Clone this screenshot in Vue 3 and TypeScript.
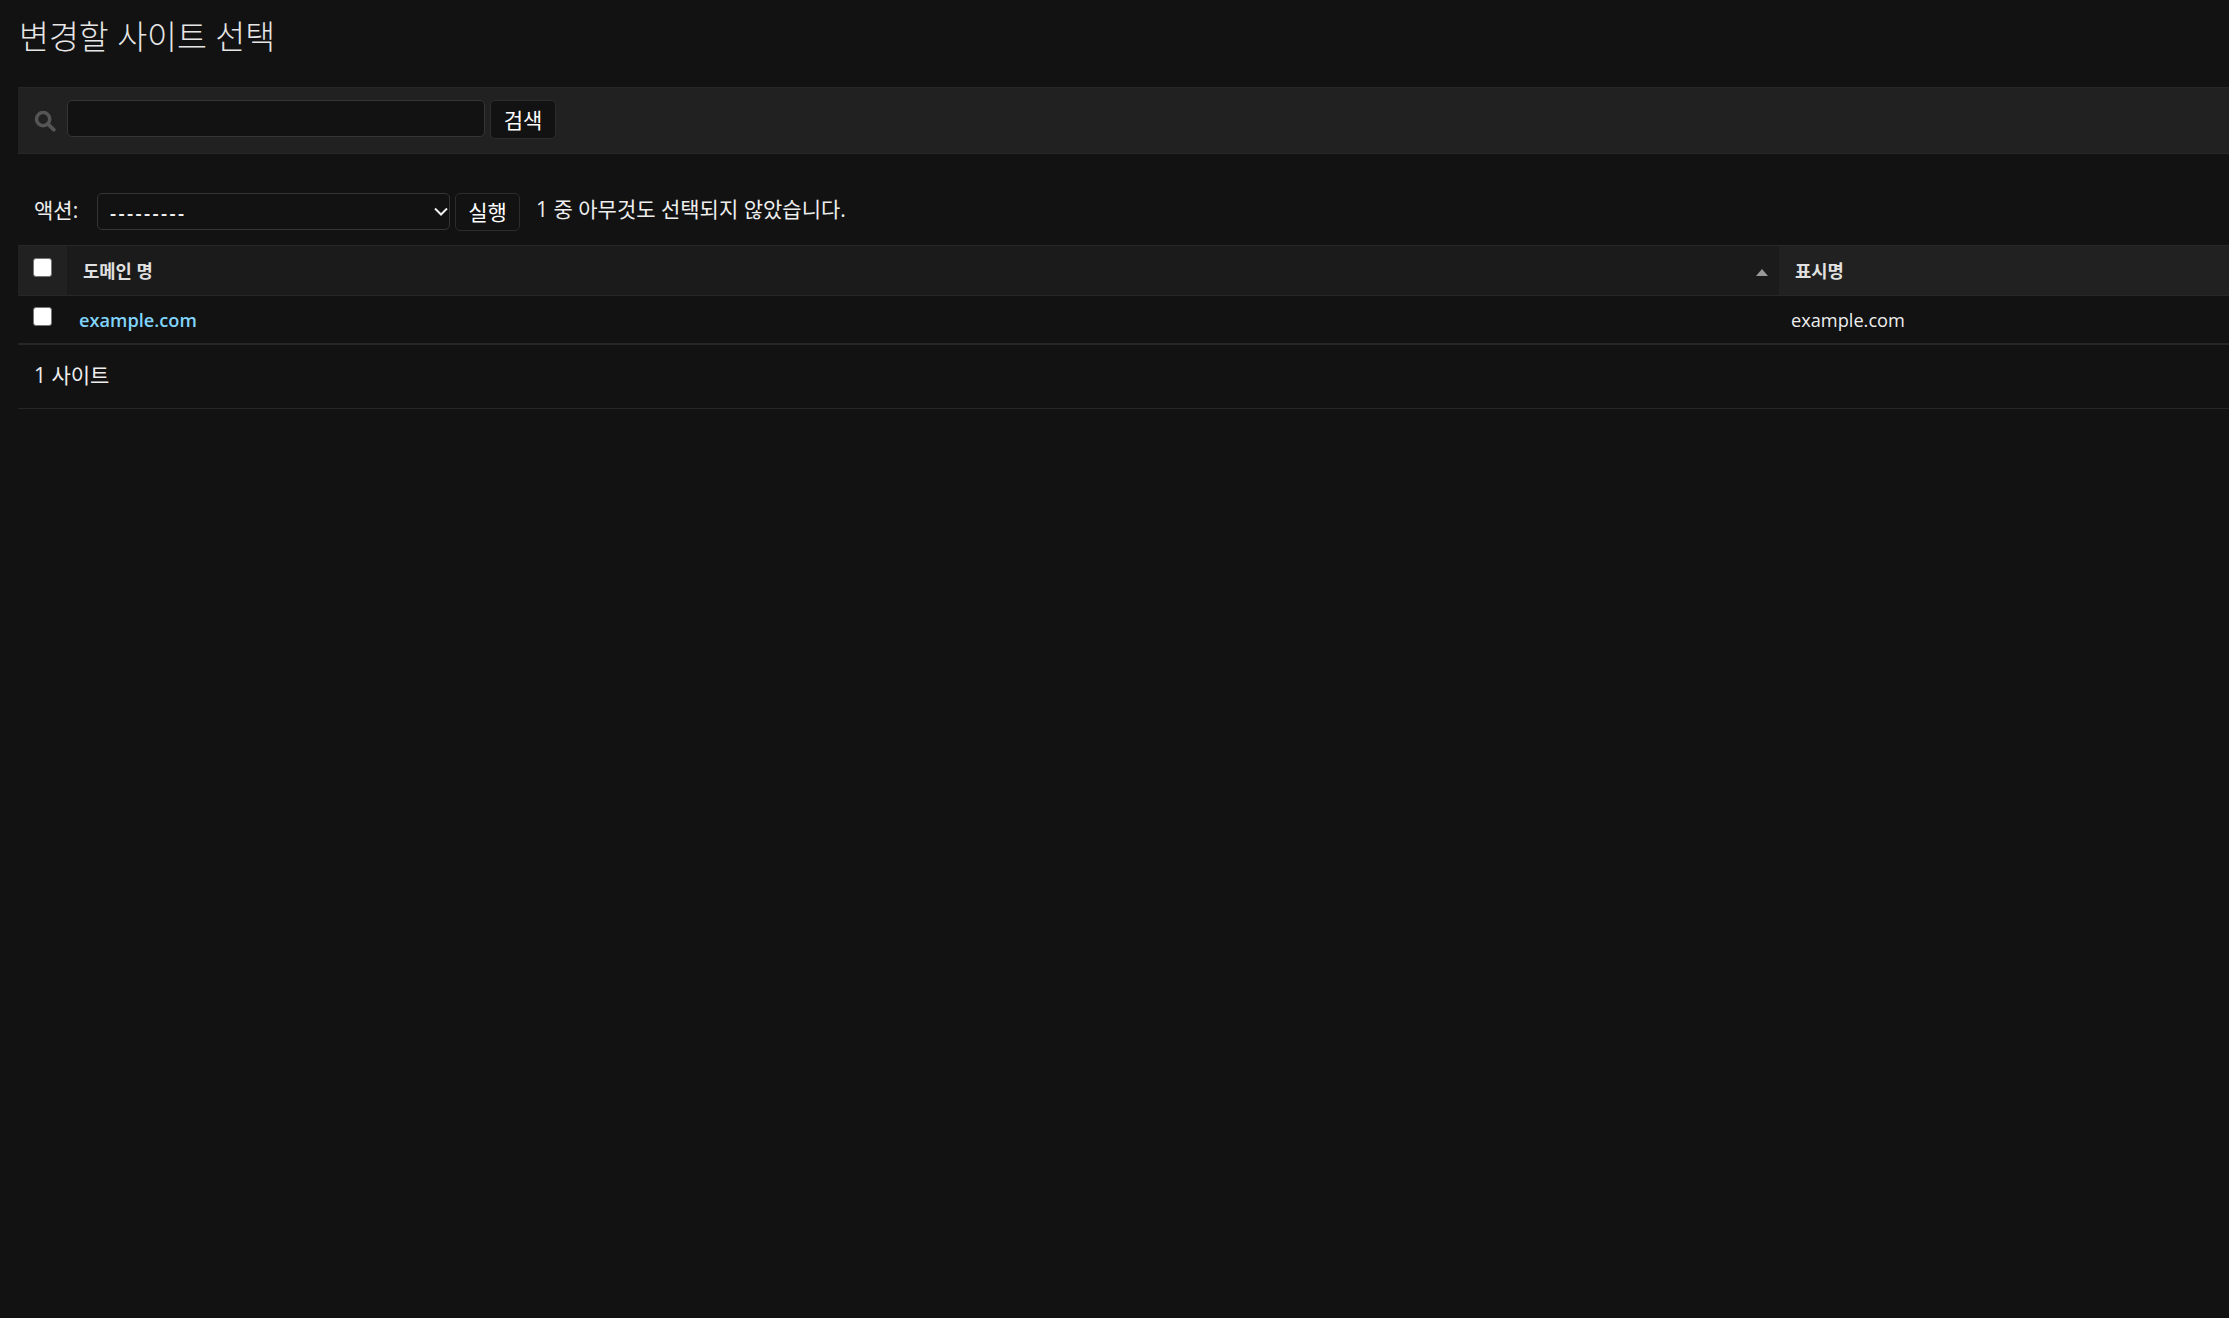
<template>
  <main class="content">
    <h1 class="page-title">변경할 사이트 선택</h1>

    <form class="toolbar" @submit.prevent>
      <svg class="search-icon" viewBox="0 0 20 20" aria-hidden="true">
        <circle cx="8.3" cy="8.3" r="6" fill="none" stroke="#555" stroke-width="3.2" />
        <path d="M12.8 12.8 18 18" stroke="#555" stroke-width="3.4" stroke-linecap="round" />
      </svg>
      <input class="search-input" type="text" />
      <button class="btn search-btn" type="submit">검색</button>
    </form>

    <div class="actions">
      <label class="actions-label">액션:</label>
      <select class="actions-select">
        <option>---------</option>
      </select>
      <button class="btn go-btn" type="button">실행</button>
      <span class="actions-counter">{{ total }} 중 아무것도 선택되지 않았습니다.</span>
    </div>

    <table class="results">
      <thead>
        <tr>
          <th class="col-check"><input type="checkbox" /></th>
          <th class="col-domain sorted">
            <div class="th-inner">
              <span>도메인 명</span>
              <span class="sort-arrow"></span>
            </div>
          </th>
          <th class="col-name">표시명</th>
        </tr>
      </thead>
      <tbody>
        <tr v-for="site in sites" :key="site.domain">
          <td class="col-check"><input type="checkbox" /></td>
          <td class="cell-domain"><a href="#" @click.prevent>{{ site.domain }}</a></td>
          <td class="cell-name">{{ site.name }}</td>
        </tr>
      </tbody>
    </table>

    <p class="paginator">{{ total }} 사이트</p>
  </main>
</template>

<script setup lang="ts">
import { computed, ref } from 'vue'

const sites = ref([{ domain: 'example.com', name: 'example.com' }])
const total = computed(() => sites.value.length)
</script>

<style scoped>
.content {
  padding: 0 0 0 18px;
  color: #eee;
  font-family: "Open Sans", "Noto Sans CJK KR", sans-serif;
  font-size: 21px;
}

.page-title {
  margin: 0;
  height: 87px;
  padding: 13px 0 0 1px;
  box-sizing: border-box;
  font-size: 32.5px;
  font-weight: 300;
  line-height: 48px;
  color: #e6e6e6;
}

.toolbar {
  display: flex;
  align-items: flex-start;
  height: 67px;
  box-sizing: border-box;
  padding: 12px 0 0 16px;
  background: #212121;
  border-top: 1px solid #272727;
  border-bottom: 1px solid #272727;
}

.search-icon {
  width: 22px;
  height: 22px;
  margin: 10px 11px 0 0;
}

.search-input {
  width: 418px;
  height: 37px;
  box-sizing: border-box;
  background: #121212;
  border: 1px solid #353535;
  border-radius: 5px;
  color: #eee;
}

.btn {
  box-sizing: border-box;
  height: 39px;
  padding: 0;
  background: #121212;
  border: 1px solid #2c2c2c;
  border-radius: 5px;
  color: #fff;
  font-family: inherit;
  font-size: 21px;
  line-height: 32px;
}

.search-btn {
  width: 66px;
  margin-left: 5px;
}

.actions {
  display: flex;
  align-items: flex-start;
  height: 91px;
  box-sizing: border-box;
  padding: 39px 0 0 16px;
  line-height: 32px;
}

.actions-label {
  width: 63px;
  flex: none;
  margin-top: 1px;
}

.actions-select {
  width: 353px;
  height: 37px;
  padding: 2px 8px 0 12px;
  appearance: none;
  background: #121212 url("data:image/svg+xml,%3Csvg xmlns='http://www.w3.org/2000/svg' viewBox='0 0 14 9'%3E%3Cpath d='M1 1.5 7 7.5 13 1.5' fill='none' stroke='%23eee' stroke-width='2'/%3E%3C/svg%3E") no-repeat right 1px center / 14px 9px;
  border: 1px solid #353535;
  border-radius: 5px;
  color: #eee;
  font-family: "Open Sans", sans-serif;
  font-size: 19px;
  font-weight: 600;
  letter-spacing: 2.4px;
}

.go-btn {
  width: 65px;
  height: 38px;
  margin-left: 5px;
}

.actions-counter {
  margin-left: 16px;
}

.results {
  width: 100%;
  border-collapse: collapse;
  table-layout: fixed;
}

th {
  height: 50px;
  padding: 0 0 2px;
  background: #212121;
  border-top: 1px solid #272727;
  border-bottom: 1px solid #272727;
  text-align: left;
  font-size: 17.7px;
  font-weight: 600;
  color: #e0e0e0;
  box-sizing: border-box;
}

td {
  height: 48px;
  padding: 1px 0 0;
  border-bottom: 2px solid #272727;
  box-sizing: border-box;
  font-size: 18.2px;
}

.col-check {
  width: 49px;
  vertical-align: top;
}

.col-check input {
  display: block;
  appearance: none;
  box-sizing: border-box;
  width: 19px;
  height: 19px;
  margin: 10px 0 0 15px;
  background: #fff;
  border: 1px solid #767676;
  border-radius: 3px;
}

th.col-check input {
  margin-top: 12px;
}

.col-domain {
  width: 1712px;
}

.sorted {
  background: #1b1b1b;
}

.th-inner {
  display: flex;
  align-items: center;
  justify-content: space-between;
  padding: 0 11px 0 16px;
}

.sort-arrow {
  width: 0;
  height: 0;
  margin-top: 5px;
  border-left: 6.5px solid transparent;
  border-right: 6.5px solid transparent;
  border-bottom: 7px solid #999;
}

.col-name {
  padding-left: 16px;
}

.cell-domain {
  padding-left: 12px;
}

.cell-domain a {
  color: #81d4fa;
  font-weight: 600;
  text-decoration: none;
}

.cell-name {
  padding-left: 12px;
}

.paginator {
  margin: 0;
  height: 64px;
  box-sizing: border-box;
  padding-left: 16px;
  line-height: 61px;
  border-bottom: 1px solid #272727;
}
</style>

<style>
html,
body {
  margin: 0;
  background: #121212;
  overflow: hidden;
}
</style>
